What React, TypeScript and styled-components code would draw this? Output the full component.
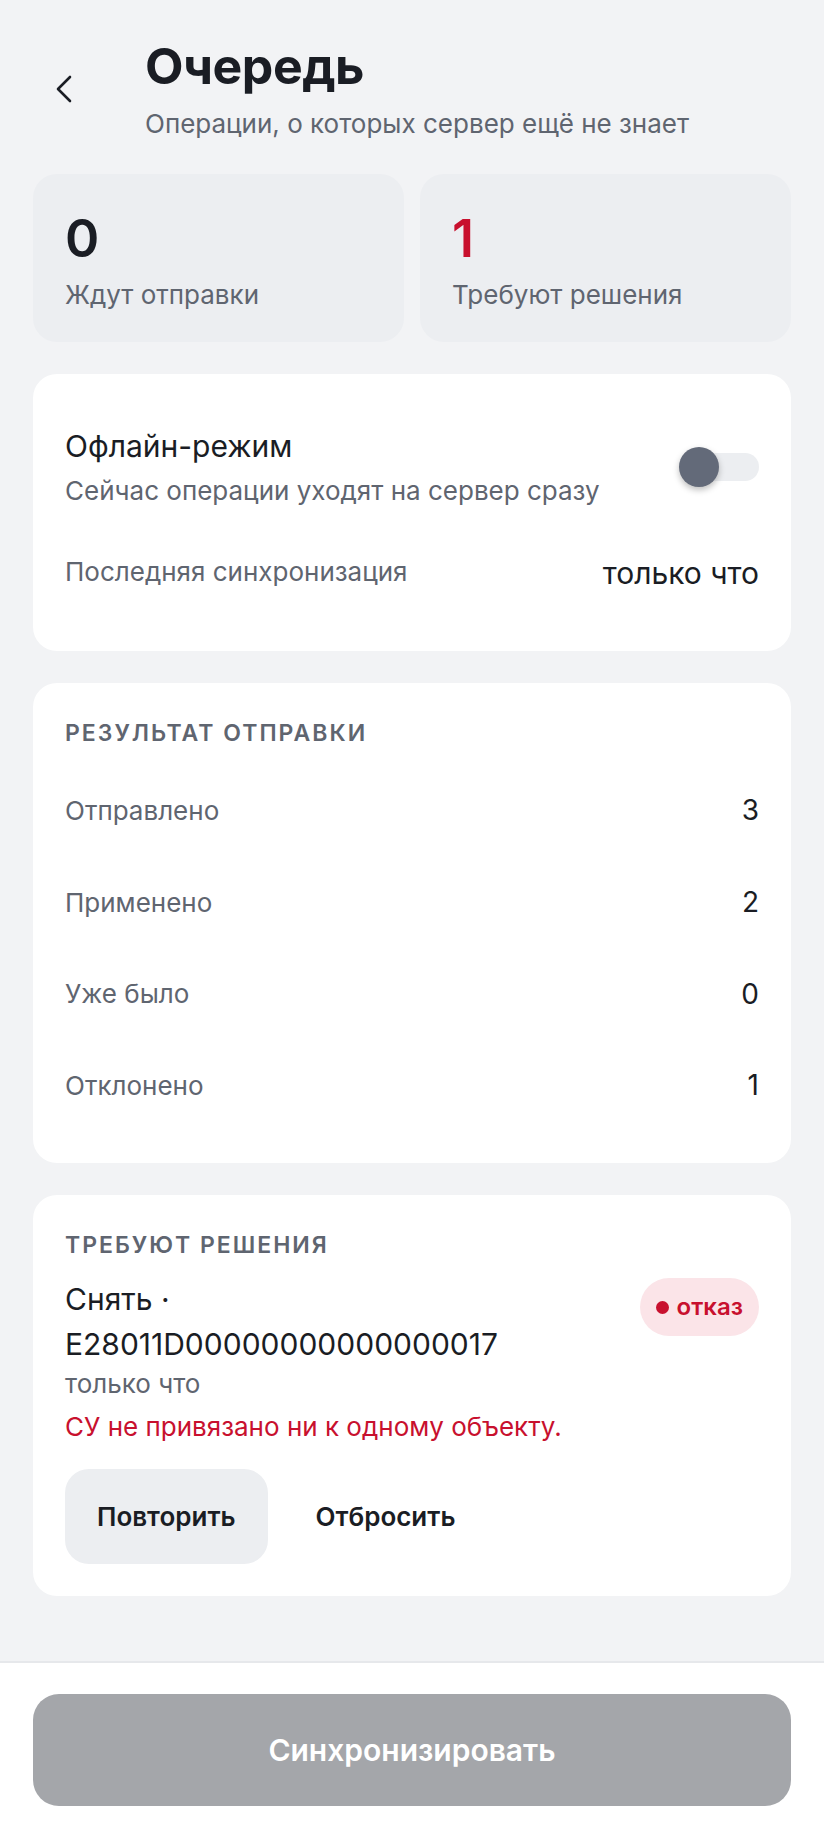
import React from "react";
import styled, { createGlobalStyle } from "styled-components";
import { ChevronLeft } from "lucide-react";

const GlobalStyle = createGlobalStyle`
  * { box-sizing: border-box; }
  html, body {
    margin: 0;
    padding: 0;
    background: #f2f3f5;
    font-family: Inter, "Noto Sans", sans-serif;
    color: #1a1d24;
  }
  button { font-family: inherit; }
`;

const Page = styled.div`
  min-height: 100vh;
  display: flex;
  flex-direction: column;
  background: #f2f3f5;
`;

const Header = styled.header`
  display: flex;
  align-items: center;
  gap: 49px;
  padding: 36px 32px 0 32px;
`;

const BackButton = styled.button`
  width: 64px;
  height: 64px;
  display: flex;
  align-items: center;
  justify-content: center;
  border: none;
  background: transparent;
  padding: 0;
  color: #1a1d24;
  cursor: pointer;
`;

const TitleBlock = styled.div`
  display: flex;
  flex-direction: column;
  gap: 10px;
`;

const Title = styled.h1`
  margin: 0;
  font-size: 50px;
  line-height: 1.2;
  font-weight: 700;
  letter-spacing: -0.5px;
  color: #1a1d24;
`;

const Subtitle = styled.p`
  margin: 0;
  font-size: 26px;
  line-height: 1.4;
  color: #5f6570;
`;

const Content = styled.main`
  display: flex;
  flex-direction: column;
  gap: 32px;
  padding: 32px 33px 0 33px;
`;

const StatGrid = styled.div`
  display: grid;
  grid-template-columns: 1fr 1fr;
  gap: 16px;
`;

const StatCard = styled.div`
  background: #eceef1;
  border-radius: 24px;
  padding: 34px 32px 29px 32px;
  display: flex;
  flex-direction: column;
  gap: 6px;
`;

const StatValue = styled.div<{ $danger?: boolean }>`
  font-size: 52px;
  line-height: 1.2;
  font-weight: 600;
  color: ${p => (p.$danger ? "#c8102e" : "#1a1d24")};
`;

const StatLabel = styled.div`
  font-size: 26px;
  line-height: 1.4;
  color: #5f6570;
`;

const Card = styled.section`
  background: #ffffff;
  border-radius: 24px;
  padding: 32px;
  display: flex;
  flex-direction: column;
`;

const ToggleRow = styled.div`
  display: flex;
  align-items: center;
  justify-content: space-between;
  gap: 24px;
  padding: 19px 0;
`;

const ToggleText = styled.div`
  display: flex;
  flex-direction: column;
  gap: 6px;
`;

const ToggleTitle = styled.div`
  font-size: 30px;
  line-height: 1.4;
  color: #1a1d24;
`;

const Hint = styled.div`
  font-size: 26px;
  line-height: 1.4;
  color: #5f6570;
`;

const SwitchTrack = styled.span`
  position: relative;
  display: block;
  width: 68px;
  height: 28px;
  border-radius: 14px;
  background: #eceef1;
  flex-shrink: 0;
  margin-left: 12px;
`;

const SwitchKnob = styled.span`
  position: absolute;
  left: -12px;
  top: -6px;
  width: 40px;
  height: 40px;
  border-radius: 50%;
  background: #636a79;
  box-shadow: 0 3px 6px rgba(0, 0, 0, 0.25);
`;

const InfoRow = styled.div`
  display: flex;
  align-items: center;
  justify-content: space-between;
  padding: 23px 0 25px 0;
`;

const InfoLabel = styled.span`
  font-size: 26px;
  line-height: 1.4;
  color: #5f6570;
`;

const InfoValue = styled.span`
  font-size: 30px;
  line-height: 1.4;
  color: #1a1d24;
`;

const SectionTitle = styled.h2`
  margin: 0 0 14px 0;
  font-size: 23px;
  line-height: 36px;
  font-weight: 600;
  letter-spacing: 2px;
  text-transform: uppercase;
  color: #5f6570;
`;

const ResultRow = styled.div`
  display: flex;
  align-items: center;
  justify-content: space-between;
  height: 91.7px;
`;

const RowLabel = styled.span`
  font-size: 26px;
  color: #5f6570;
`;

const RowValue = styled.span`
  font-size: 28px;
  color: #1a1d24;
`;

const ItemHead = styled.div`
  display: flex;
  align-items: flex-start;
  justify-content: space-between;
  gap: 48px;
`;

const ItemTitle = styled.div`
  font-size: 30px;
  line-height: 1.5;
  color: #1a1d24;
  min-width: 0;
`;

const Badge = styled.span`
  display: inline-flex;
  align-items: center;
  gap: 8px;
  flex-shrink: 0;
  padding: 11px 16px;
  border-radius: 29px;
  background: #fbe4e8;
  color: #c8102e;
  font-size: 24px;
  line-height: 36px;
  font-weight: 600;
  margin-top: 1px;
`;

const Dot = styled.span`
  width: 13px;
  height: 13px;
  border-radius: 50%;
  background: #c8102e;
`;

const ItemTime = styled.div`
  font-size: 26px;
  line-height: 1.3;
  color: #5f6570;
`;

const ItemError = styled.div`
  margin-top: 8px;
  font-size: 26px;
  line-height: 1.4;
  color: #c8102e;
`;

const Actions = styled.div`
  display: flex;
  gap: 16px;
  margin-top: 23px;
`;

const ActionButton = styled.button<{ $filled?: boolean }>`
  height: 95px;
  padding: 0 32px;
  border: none;
  border-radius: 24px;
  background: ${p => (p.$filled ? "#eceef1" : "transparent")};
  color: #1a1d24;
  font-size: 26px;
  font-weight: 600;
  cursor: pointer;
`;

const Footer = styled.footer`
  margin-top: auto;
  background: #ffffff;
  border-top: 2px solid #e6e8eb;
  padding: 31px 33px 24px 33px;
`;

const SyncButton = styled.button`
  width: 100%;
  height: 112px;
  border: none;
  border-radius: 26px;
  background: #a4a6aa;
  color: #ffffff;
  font-size: 30px;
  font-weight: 600;
  cursor: default;
`;

const results = [
  { label: "Отправлено", value: 3 },
  { label: "Применено", value: 2 },
  { label: "Уже было", value: 0 },
  { label: "Отклонено", value: 1 },
];

export default function App() {
  return (
    <>
      <GlobalStyle />
      <Page>
        <Header>
          <BackButton aria-label="Назад">
            <ChevronLeft size={48} strokeWidth={1.3} />
          </BackButton>
          <TitleBlock>
            <Title>Очередь</Title>
            <Subtitle>Операции, о которых сервер ещё не знает</Subtitle>
          </TitleBlock>
        </Header>

        <Content>
          <StatGrid>
            <StatCard>
              <StatValue>0</StatValue>
              <StatLabel>Ждут отправки</StatLabel>
            </StatCard>
            <StatCard>
              <StatValue $danger>1</StatValue>
              <StatLabel>Требуют решения</StatLabel>
            </StatCard>
          </StatGrid>

          <Card>
            <ToggleRow>
              <ToggleText>
                <ToggleTitle>Офлайн-режим</ToggleTitle>
                <Hint>Сейчас операции уходят на сервер сразу</Hint>
              </ToggleText>
              <SwitchTrack role="switch" aria-checked={false}>
                <SwitchKnob />
              </SwitchTrack>
            </ToggleRow>
            <InfoRow>
              <InfoLabel>Последняя синхронизация</InfoLabel>
              <InfoValue>только что</InfoValue>
            </InfoRow>
          </Card>

          <Card>
            <SectionTitle>Результат отправки</SectionTitle>
            {results.map(r => (
              <ResultRow key={r.label}>
                <RowLabel>{r.label}</RowLabel>
                <RowValue>{r.value}</RowValue>
              </ResultRow>
            ))}
          </Card>

          <Card>
            <SectionTitle>Требуют решения</SectionTitle>
            <ItemHead>
              <ItemTitle>Снять · E28011D00000000000000017</ItemTitle>
              <Badge>
                <Dot />
                отказ
              </Badge>
            </ItemHead>
            <ItemTime>только что</ItemTime>
            <ItemError>СУ не привязано ни к одному объекту.</ItemError>
            <Actions>
              <ActionButton $filled>Повторить</ActionButton>
              <ActionButton>Отбросить</ActionButton>
            </Actions>
          </Card>
        </Content>

        <Footer>
          <SyncButton disabled>Синхронизировать</SyncButton>
        </Footer>
      </Page>
    </>
  );
}
